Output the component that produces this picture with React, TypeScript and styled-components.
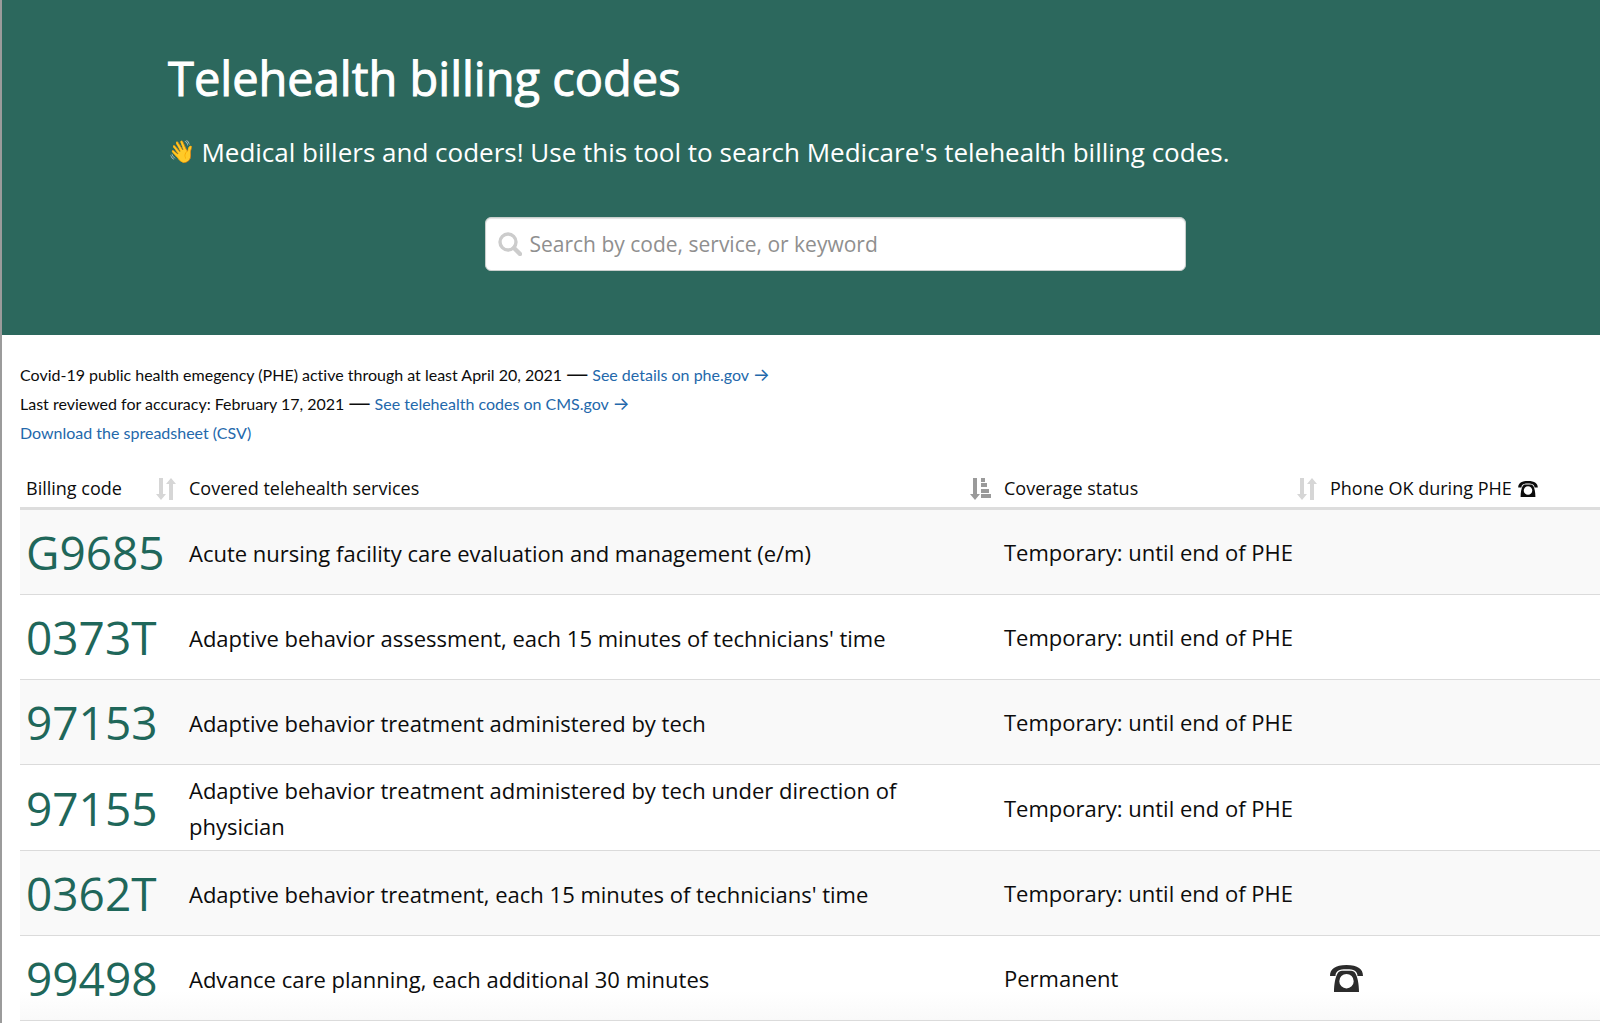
import React, { useState } from "react";
import styled, { createGlobalStyle } from "styled-components";

const GlobalStyle = createGlobalStyle`
  *, *::before, *::after { box-sizing: border-box; }
  body {
    margin: 0;
    background: #ffffff;
    color: #0c0c0c;
    font-family: "Open Sans", "Noto Sans", sans-serif;
  }
`;

const Frame = styled.div`
  min-height: 100vh;
  border-left: 2px solid #9b9b9b;
  overflow: hidden;
`;

const Hero = styled.header`
  padding: 46px 98px 64px 166px;
  background: #2c685d;
  color: #ffffff;
`;

const Title = styled.h1`
  margin: 0 0 24px;
  font-size: 47px;
  line-height: 64px;
  font-weight: 400;
  -webkit-text-stroke: 1px currentColor;
`;

const Lead = styled.p`
  display: flex;
  align-items: center;
  gap: 6px;
  margin: 0 0 47px;
  font-size: 26px;
  line-height: 36px;
`;

const Wave = styled.span`
  font-family: "Noto Color Emoji", sans-serif;
  font-size: 22px;
`;

const SearchBox = styled.label`
  display: flex;
  align-items: center;
  gap: 8px;
  width: 100%;
  max-width: 701px;
  height: 54px;
  margin: 0 auto;
  padding: 0 12px;
  border: 1px solid #c9cfcd;
  border-radius: 6px;
  background: #ffffff;
  box-shadow: inset 0 1px 1px rgba(0, 0, 0, 0.12);
`;

const SearchInput = styled.input`
  flex: 1;
  min-width: 0;
  padding: 0;
  border: 0;
  outline: 0;
  background: transparent;
  color: #333333;
  font: inherit;
  font-size: 21px;
  line-height: 30px;

  &::placeholder {
    color: #8f8f8f;
    opacity: 1;
  }
`;

const Main = styled.main`
  padding: 25px 0 0 18px;
`;

const Notes = styled.div`
  margin-bottom: 16px;
  font-family: Lato, "Open Sans", sans-serif;
  font-size: 16px;
  line-height: 29px;
  font-variant-ligatures: none;
`;

const Note = styled.p`
  margin: 0;
`;

const Dash = styled.span`
  font-family: "Open Sans", sans-serif;
  font-size: 22px;
  line-height: 1;
`;

const Arrow = styled.span`
  font-family: Inter, sans-serif;
  font-size: 18px;
  line-height: 1;
`;

const NoteLink = styled.a`
  color: #2368ab;
  text-decoration: none;
`;

const CodeTable = styled.table`
  width: calc(100% + 50px);
  table-layout: fixed;
  border-spacing: 0;
  text-align: left;
`;

const Col = styled.col<{ $share: number }>`
  width: ${(p) => p.$share}%;
`;

const HeadCell = styled.th`
  padding: 13px 6px 6px;
  border-bottom: 3px solid #dddddd;
  font-size: 18px;
  line-height: 25px;
  font-weight: 400;
`;

const HeadButton = styled.button`
  display: flex;
  align-items: center;
  justify-content: space-between;
  width: 100%;
  padding: 0;
  border: 0;
  background: none;
  color: inherit;
  font: inherit;
  cursor: pointer;
`;

const HeadLabel = styled.span`
  display: flex;
  align-items: center;
  gap: 6px;
`;

const BodyRow = styled.tr`
  height: 85px;

  &:nth-child(odd) {
    background: #f9f9f9;
  }

  &:last-child {
    background: linear-gradient(#ffffff 65%, #f9f9f9);
  }
`;

const Cell = styled.td`
  padding: 6px;
  border-bottom: 1px solid #dbdbdb;
  font-size: 22px;
  line-height: 36px;
  vertical-align: middle;
`;

const ServiceCell = styled(Cell)`
  padding: 7px 24px 6px 6px;
`;

const CodeCell = styled(Cell)`
  color: #1f675a;
  font-size: 46px;
  line-height: 60px;
`;

const Icon = styled.svg`
  display: block;
  flex: none;
`;

function SearchIcon() {
  return (
    <Icon width="24" height="24" viewBox="0 0 24 24" fill="none" stroke="#cccccc" aria-hidden="true">
      <circle cx="10" cy="10" r="8" strokeWidth="3.4" />
      <path d="M16 16L22 22" strokeWidth="4.4" strokeLinecap="round" />
    </Icon>
  );
}

function SortIcon() {
  return (
    <Icon width="22" height="22" viewBox="0 0 22 22" fill="#d6d6d6" aria-hidden="true">
      <path d="M4 0h4v16h3l-5 6-5-6h3z" />
      <path d="M14 22h4V6h3l-5-6-5 6h3z" />
    </Icon>
  );
}

function SortedIcon() {
  return (
    <Icon width="22" height="22" viewBox="0 0 22 22" fill="#9a9a9a" aria-hidden="true">
      <path d="M3 0h4v16h3l-5 6-5-6h3z" />
      <path d="M11 0h4v4h-4zM11 5h6v4h-6zM11 11h8v4h-8zM11 16h10v4H11z" />
    </Icon>
  );
}

function PhoneIcon({ size, color }: { size: number; color: string }) {
  return (
    <Icon
      width={size}
      height={Math.round((size * 27) / 33)}
      viewBox="0 0 33 27"
      fill={color}
      role="img"
      aria-label="Phone OK"
    >
      <path d="M0 11C0 4 5 0 16.5 0S33 4 33 11H27.500C27.500 6 24 4.200 16.500 4.200S5.500 6 5.500 11z" />
      <path
        fillRule="evenodd"
        d="M4 27C4 19 5.500 12 7.500 8.500C8.500 6.600 10 5.800 12 5.800H21C23 5.800 24.500 6.600 25.500 8.500C27.500 12 29 19 29 27zM16.500 9a7.200 7.200 0 1 0 0 14.400a7.200 7.200 0 1 0 0-14.400z"
      />
    </Icon>
  );
}

const TEMPORARY = "Temporary: until end of PHE";

const CODES = [
  { code: "G9685", service: "Acute nursing facility care evaluation and management (e/m)", status: TEMPORARY, phone: false },
  { code: "0373T", service: "Adaptive behavior assessment, each 15 minutes of technicians' time", status: TEMPORARY, phone: false },
  { code: "97153", service: "Adaptive behavior treatment administered by tech", status: TEMPORARY, phone: false },
  { code: "97155", service: "Adaptive behavior treatment administered by tech under direction of physician", status: TEMPORARY, phone: false },
  { code: "0362T", service: "Adaptive behavior treatment, each 15 minutes of technicians' time", status: TEMPORARY, phone: false },
  { code: "99498", service: "Advance care planning, each additional 30 minutes", status: "Permanent", phone: true },
];

export default function App() {
  const [query, setQuery] = useState("");
  const needle = query.trim().toLowerCase();
  const rows = CODES.filter((row) => `${row.code} ${row.service}`.toLowerCase().includes(needle));

  return (
    <>
      <GlobalStyle />
      <Frame>
        <Hero>
          <Title>Telehealth billing codes</Title>
          <Lead>
            <Wave>👋</Wave>
            Medical billers and coders! Use this tool to search Medicare's telehealth billing codes.
          </Lead>
          <SearchBox htmlFor="code-search">
            <SearchIcon />
            <SearchInput
              id="code-search"
              type="text"
              placeholder="Search by code, service, or keyword"
              value={query}
              onChange={(event) => setQuery(event.target.value)}
            />
          </SearchBox>
        </Hero>
        <Main>
          <Notes>
            <Note>
              Covid-19 public health emegency (PHE) active through at least April 20, 2021 <Dash>—</Dash>{" "}
              <NoteLink href="#phe">
                See details on phe.gov <Arrow>→</Arrow>
              </NoteLink>
            </Note>
            <Note>
              Last reviewed for accuracy: February 17, 2021 <Dash>—</Dash>{" "}
              <NoteLink href="#cms">
                See telehealth codes on CMS.gov <Arrow>→</Arrow>
              </NoteLink>
            </Note>
            <Note>
              <NoteLink href="#csv">Download the spreadsheet (CSV)</NoteLink>
            </Note>
          </Notes>
          <CodeTable>
            <colgroup>
              <Col $share={10} />
              <Col $share={50} />
              <Col $share={20} />
              <Col $share={20} />
            </colgroup>
            <thead>
              <tr>
                <HeadCell scope="col">
                  <HeadButton type="button">
                    Billing code
                    <SortIcon />
                  </HeadButton>
                </HeadCell>
                <HeadCell scope="col" aria-sort="ascending">
                  <HeadButton type="button">
                    Covered telehealth services
                    <SortedIcon />
                  </HeadButton>
                </HeadCell>
                <HeadCell scope="col">
                  <HeadButton type="button">
                    Coverage status
                    <SortIcon />
                  </HeadButton>
                </HeadCell>
                <HeadCell scope="col">
                  <HeadLabel>
                    Phone OK during PHE
                    <PhoneIcon size={20} color="#0c0c0c" />
                  </HeadLabel>
                </HeadCell>
              </tr>
            </thead>
            <tbody>
              {rows.map((row) => (
                <BodyRow key={row.code}>
                  <CodeCell>{row.code}</CodeCell>
                  <ServiceCell>{row.service}</ServiceCell>
                  <Cell>{row.status}</Cell>
                  <Cell>{row.phone && <PhoneIcon size={33} color="#2b2b2b" />}</Cell>
                </BodyRow>
              ))}
            </tbody>
          </CodeTable>
        </Main>
      </Frame>
    </>
  );
}
